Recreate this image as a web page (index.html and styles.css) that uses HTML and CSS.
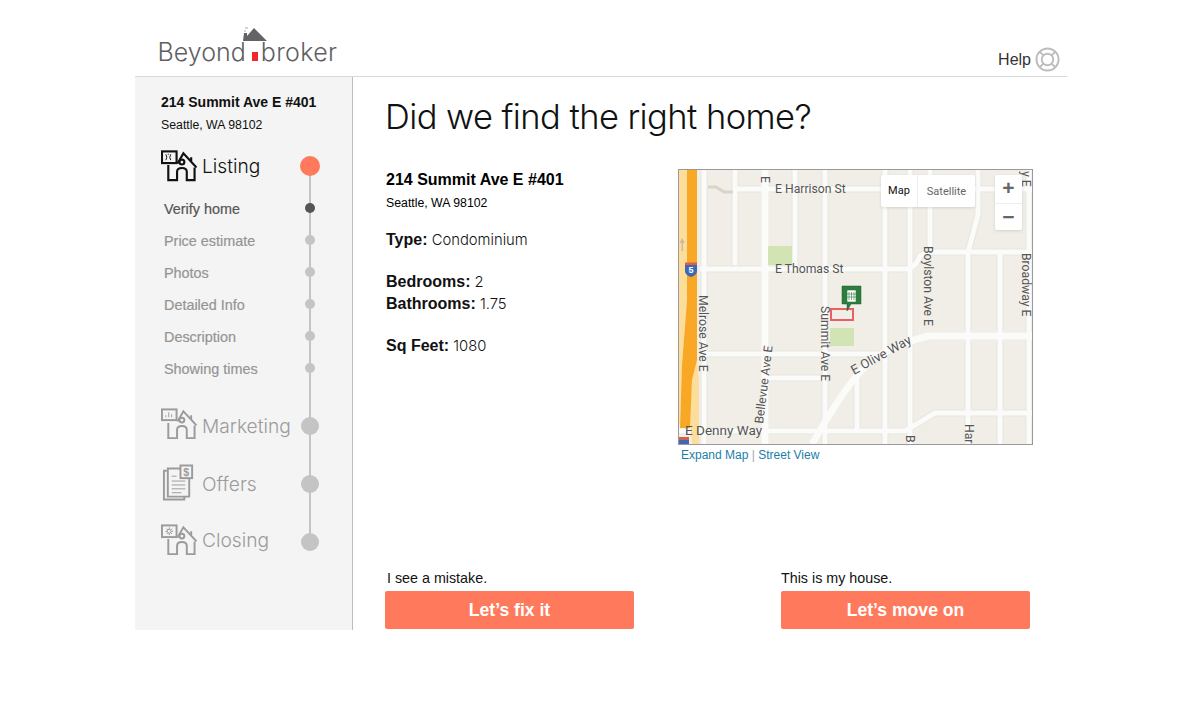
FILE: index.html
```html
<!DOCTYPE html>
<html lang="en">
<head>
<meta charset="utf-8">
<title>Beyond broker</title>
<link rel="stylesheet" href="styles.css">
</head>
<body>
<div class="page">
  <header class="header">
    <div class="logo">
      <span class="logo-word">Beyond</span>
      <svg class="logo-house" viewBox="0 0 24 36" aria-hidden="true">
        <path class="lh-smoke" d="M1 5h2M2 2h3"/>
        <path class="lh-roof" d="M0 15 L1 7 H4 V10 L11 2 L24 15 Z"/>
        <rect class="lh-door" x="9" y="26" width="6" height="9"/>
      </svg>
      <span class="logo-word logo-second">broker</span>
    </div>
    <div class="help">
      <span>Help</span>
      <svg class="help-icon" viewBox="0 0 26 26" aria-hidden="true">
        <circle cx="13" cy="13" r="11.5"/>
        <circle cx="13" cy="13" r="6"/>
        <path d="M5 5l4 4M21 5l-4 4M5 21l4-4M21 21l-4-4"/>
      </svg>
    </div>
  </header>

  <div class="body-row">
    <aside class="sidebar">
      <div class="side-address">
        <div class="side-street">214 Summit Ave E #401</div>
        <div class="side-city">Seattle, WA 98102</div>
      </div>
      <nav class="steps">
        <div class="step step-active">
          <div class="step-label">
            <svg class="step-icon" viewBox="0 0 37 32" aria-hidden="true">
              <path d="M7.5 15 V30.5 H16.5 V22 Q16.5 18 21.500 18 Q26.500 18 26.500 22 V30.500 H34.500 V17.500"/>
              <path d="M17 13.500 L23 3 L36.500 17.500 M31 7V11"/>
              <circle cx="21.500" cy="12" r="2.500"/>
              <rect class="icon-box" x="1" y="1" width="15" height="12"/>
              <path class="thin" d="M5 4 Q7 7 5 10 M10 4 Q8 7 10 10 M7 4h1"/>
            </svg>
            <span>Listing</span>
          </div>
          <span class="dot dot-big dot-accent"></span>
        </div>

        <div class="substeps">
          <div class="sub sub-current"><span>Verify home</span><span class="dot dot-small"></span></div>
          <div class="sub"><span>Price estimate</span><span class="dot dot-small"></span></div>
          <div class="sub"><span>Photos</span><span class="dot dot-small"></span></div>
          <div class="sub"><span>Detailed Info</span><span class="dot dot-small"></span></div>
          <div class="sub"><span>Description</span><span class="dot dot-small"></span></div>
          <div class="sub"><span>Showing times</span><span class="dot dot-small"></span></div>
        </div>

        <div class="step step-marketing">
          <div class="step-label">
            <svg class="step-icon" viewBox="0 0 37 32" aria-hidden="true">
              <path d="M7.500 15 V30.500 H16.500 V22 Q16.500 18 21.500 18 Q26.500 18 26.500 22 V30.500 H34.500 V17.500"/>
              <path d="M17 13.500 L23 3 L36.500 17.500 M31 7V11"/>
              <circle cx="21.500" cy="12" r="2.500"/>
              <rect class="icon-box" x="1" y="1" width="15" height="11"/>
              <path class="thin" d="M5 9V7M8 9V4M11 9V6"/>
            </svg>
            <span>Marketing</span>
          </div>
          <span class="dot dot-big"></span>
        </div>

        <div class="step step-offers">
          <div class="step-label">
            <svg class="step-icon" viewBox="0 0 37 38" aria-hidden="true">
              <path d="M6 6.500 H3 V36 H24 V33"/>
              <path d="M21 4 H7 V33 H29 V15"/>
              <path class="thin" d="M11 12h5M11 17h14M11 21h14M11 25h14M11 29h10"/>
              <rect class="icon-box" x="20" y="1" width="12" height="13"/>
              <text class="icon-dollar" x="26" y="11.500">$</text>
            </svg>
            <span>Offers</span>
          </div>
          <span class="dot dot-big"></span>
        </div>

        <div class="step step-closing">
          <div class="step-label">
            <svg class="step-icon" viewBox="0 0 37 32" aria-hidden="true">
              <path d="M7.500 15 V30.500 H16.500 V22 Q16.500 18 21.500 18 Q26.500 18 26.500 22 V30.500 H34.500 V17.500"/>
              <path d="M17 13.500 L23 3 L36.500 17.500 M31 7V11"/>
              <circle cx="21.500" cy="12" r="2.500"/>
              <rect class="icon-box" x="1" y="1" width="15" height="12"/>
              <circle class="thin" cx="8.500" cy="7" r="2"/>
              <path class="thin" d="M8.500 3V5M8.500 9V11M4.500 7H6.500M10.500 7H12.500M5.700 4.200L7 5.500M11.300 4.200L10 5.500M5.700 9.800L7 8.500M11.300 9.800L10 8.500"/>
            </svg>
            <span>Closing</span>
          </div>
          <span class="dot dot-big"></span>
        </div>
      </nav>
    </aside>

    <main class="main">
      <h1 class="title">Did we find the right home?</h1>
      <div class="columns">
        <section class="details">
          <div class="street">214 Summit Ave E #401</div>
          <div class="city">Seattle, WA 98102</div>
          <p class="fact"><b>Type:</b> Condominium</p>
          <p class="fact"><b>Bedrooms:</b> 2<br><b>Bathrooms:</b> 1.75</p>
          <p class="fact"><b>Sq Feet:</b> 1080</p>
        </section>
        <section class="map-col">
          <div class="map">
            <svg class="map-art" viewBox="679 170 353 274" aria-hidden="true">
              <rect x="679" y="170" width="353" height="274" fill="#f1eee8"/>
              <g class="edges">
                <path d="M735 170V265M765 170V444M795 170V269M825 170V444M857 375V431M885 170V444M910 170V444M930 170V250M1000 250V444M1029 170V444M704 170V444"/>
                <path d="M735 189H1032M700 269H905Q915 269 920 256Q925 252 935 252H1032M700 354H880M765 378H825M679 431H905L935 413H1032"/>
                <path d="M812 444C835 405 850 380 870 362C885 350 905 342 928 336H1032"/>
                <path d="M978 170V215L968 252V444"/>
              </g>
              <g class="roads">
                <path d="M735 170V265M795 170V269M825 170V444M857 375V431M885 170V444M910 170V444M930 170V250M1000 250V444M1029 170V444M704 170V444"/>
                <path d="M735 189H1032M700 269H905Q915 269 920 256Q925 252 935 252H1032M700 354H880M765 378H825M679 431H905L935 413H1032"/>
                <path d="M978 170V215L968 252V444"/>
                <path class="road-wide" d="M812 444C835 405 850 380 870 362C885 350 905 342 928 336H1032"/>
                <path class="road-wide" d="M765 170V444"/>
              </g>
              <path class="path-tan" d="M708 187H716L724 192H733"/>
              <rect class="park" x="768" y="246" width="24" height="19"/>
              <rect class="park" x="830" y="328" width="24" height="18"/>
              <path class="fwy-pale" d="M679 170H687V300L682 365L680 424H679Z"/>
              <path class="fwy-pale" d="M697 360L699 380V444H692L690 424L692 380Z"/>
              <path class="fwy" d="M687 170H697V360L692 380L690 428H680L682 365L687 300Z"/>
              <path class="arrow" d="M682 238L679.500 243H681.500V251H683V243H685Z"/>
              <path class="shield-top" d="M685 262.500H697V265H685Z"/>
              <path class="shield" d="M685 265H697V271Q697 275 691 277Q685 275 685 271Z"/>
              <text class="shield-text" x="691" y="273">5</text>
              <rect class="shield-top" x="679" y="437" width="10" height="3"/>
              <rect class="shield" x="679" y="440" width="10" height="4"/>

              <text class="lbl" x="775" y="193">E Harrison St</text>
              <text class="lbl" x="775" y="273">E Thomas St</text>
              <text class="lbl lbl-big" x="685" y="435">E Denny Way</text>
              <text class="lbl" transform="translate(761 176) rotate(90)">E</text>
              <text class="lbl" transform="translate(699 295) rotate(90)">Melrose Ave E</text>
              <text class="lbl" transform="translate(821 306) rotate(90)">Summit Ave E</text>
              <text class="lbl" transform="translate(924 246) rotate(90)">Boylston Ave E</text>
              <text class="lbl" transform="translate(1022 253) rotate(90)">Broadway E</text>
              <text class="lbl" transform="translate(1022 171) rotate(90)">y E</text>
              <text class="lbl" transform="translate(763 424) rotate(-83)">Bellevue Ave E</text>
              <text class="lbl lbl-olive" transform="translate(854 375) rotate(-29)">E Olive Way</text>
              <text class="lbl" transform="translate(906 435) rotate(90)">B</text>
              <text class="lbl" transform="translate(965 424) rotate(90)">Har</text>

              <rect class="lot" x="831" y="309" width="22" height="11"/>
              <path class="pin" d="M842 286H861V304H851L847 311V304H842Z"/>
              <path class="pin-b" d="M847 290h9v12h-9zM849 292v8M851.500 292v8M854 292v8M847 294h9M847 297h9"/>
            </svg>
            <div class="map-type">
              <span class="type-on">Map</span>
              <span class="type-off">Satellite</span>
            </div>
            <div class="map-zoom">
              <span class="zoom-btn">+</span>
              <span class="zoom-btn">&minus;</span>
            </div>
          </div>
          <div class="map-links"><a>Expand Map</a> <span class="sep">|</span> <a>Street View</a></div>
        </section>
      </div>
      <div class="cta-row">
        <div class="cta">
          <div class="cta-note cta-note-shift">I see a mistake.</div>
          <button class="btn" type="button">Let’s fix it</button>
        </div>
        <div class="cta">
          <div class="cta-note">This is my house.</div>
          <button class="btn" type="button">Let’s move on</button>
        </div>
      </div>
    </main>
  </div>
</div>
</body>
</html>
```

FILE: styles.css
```css
* { box-sizing: border-box; }
html, body { margin: 0; padding: 0; background: #fff; }
body { font-family: "Liberation Sans", Arial, sans-serif; color: #000; }
.page { width: 932px; margin-left: 135px; height: 722px; }

/* header */
.header { height: 77px; border-bottom: 1px solid #d9d9d9; display: flex; justify-content: space-between; align-items: flex-start; }
.logo { position: relative; display: flex; margin: 36px 0 0 22.500px; }
.logo-word { font-family: Inter, sans-serif; font-weight: 300; font-size: 25px; line-height: 33px; color: #5f5f63; }
.logo-second { margin-left: 15px; letter-spacing: 0.350px; }
.logo-house { position: absolute; left: 85.500px; top: -10px; width: 24px; height: 36px; }
.lh-smoke { stroke: #aaa; stroke-width: 1; fill: none; }
.lh-roof { fill: #636366; }
.lh-door { fill: #f0282d; }
.help { display: flex; align-items: center; margin: 47px 7px 0 0; font-size: 16px; color: #333; gap: 4px; }
.help-icon { width: 25px; height: 25px; fill: none; stroke: #bdbdbd; stroke-width: 2; }

/* layout */
.body-row { display: flex; height: 553px; }

/* sidebar */
.sidebar { width: 218px; background: #f4f4f4; border-right: 1px solid #bdbdbd; padding: 16px 32px 0 26px; }
.side-street { font-size: 14px; font-weight: 700; line-height: 18px; color: #111; }
.side-city { font-size: 12.300px; line-height: 18px; margin-top: 5px; color: #111; }
.steps { position: relative; margin-top: 16px; }
.steps::before { content: ""; position: absolute; top: 16px; right: 9px; width: 2px; height: 376px; background: #c4c4c4; }
.step { position: relative; display: flex; justify-content: space-between; align-items: center; height: 32px; color: #9b9b9b; }
.step-active { color: #111; }
.step-label { display: flex; align-items: center; font-family: Inter, sans-serif; font-weight: 300; font-size: 19.200px; }
.step-label span { margin-left: 5px; }
.step-icon { width: 36px; height: 32px; fill: none; stroke: currentColor; stroke-width: 2; flex: none; }
.step-active .step-icon { stroke-width: 2.200; }
.step-icon .thin { stroke-width: 1; }
.icon-box { fill: #f4f4f4; }
.icon-dollar { font-size: 11px; font-weight: 700; text-anchor: middle; stroke: none; fill: currentColor; font-family: "Liberation Sans", sans-serif; }
.step-marketing { margin-top: 23px; height: 36px; }
.step-marketing .step-icon { margin-bottom: 4px; }
.step-offers { margin-top: 22px; height: 36px; }
.step-closing { margin-top: 22px; height: 36px; }
.step-closing .step-label { margin-bottom: 4px; }
.step-offers .step-icon { height: 38px; width: 36px; margin-bottom: 2px; }
.dot { position: relative; display: block; border-radius: 50%; background: #c4c4c4; flex: none; }
.dot-big { width: 18px; height: 18px; margin-right: 1px; }
.dot-accent { width: 20px; height: 20px; margin-right: 0; background: #ff7a5c; }
.dot-small { width: 10px; height: 10px; margin-right: 5px; margin-bottom: 2px; }
.substeps { margin-top: 11px; }
.sub { display: flex; justify-content: space-between; align-items: center; height: 32px; padding-left: 3px; font-size: 14.400px; color: #949494; -webkit-text-stroke: 0.2px currentColor; }
.sub-current { color: #555; }
.sub-current .dot { background: #555; }

/* main */
.main { flex: 1; padding: 0 34px 1px 33px; display: flex; flex-direction: column; }
.title { margin: 17px 0 0 -1px; font-family: Inter, sans-serif; font-weight: 300; font-size: 34.500px; letter-spacing: -0.570px; line-height: 46px; color: #111; }
.columns { display: flex; justify-content: space-between; margin-top: 29px; flex: 1; }
.details { width: 280px; }
.street { font-size: 16px; font-weight: 700; line-height: 20px; margin-top: 1px; }
.city { font-size: 12.300px; line-height: 18px; margin-top: 4px; }
.fact { margin: 0 0 20px; font-family: Inter, sans-serif; font-weight: 300; font-size: 14.800px; line-height: 22px; color: #111; }
.city + .fact { margin-top: 17px; }
.fact b { font-family: "Liberation Sans", sans-serif; font-size: 16px; font-weight: 700; }
.map-col { width: 355px; }
.map { position: relative; width: 355px; height: 276px; border: 1px solid #999; overflow: hidden; }
.map-art { display: block; width: 353px; height: 274px; }
.edges path { fill: none; stroke: #e7e5df; stroke-width: 7; }
.roads path { fill: none; stroke: #fbfbf9; stroke-width: 5; }
.roads .road-wide { stroke-width: 7; }
.path-tan { fill: none; stroke: #d8d4c8; stroke-width: 3; }
.park { fill: #d2e3b4; }
.fwy { fill: #f9a825; }
.fwy-pale { fill: #fddd9a; }
.arrow { fill: #c9bda0; }
.shield { fill: #3d68b5; }
.shield-top { fill: #d9614a; }
.shield-text { font-family: "Liberation Sans", sans-serif; font-size: 9px; font-weight: 700; fill: #fff; text-anchor: middle; }
.lbl { font-family: Roboto, sans-serif; font-size: 12.200px; fill: #555; }
.lbl-big { font-size: 13.500px; }
.lbl-olive { font-size: 13px; }
.lot { fill: none; stroke: #ea5f5f; stroke-width: 2; }
.pin { fill: #2e7d3c; stroke: #1f5f2c; stroke-width: .5; }
.pin-b { fill: #fff; stroke: #2e7d3c; stroke-width: .6; }
.map-type { position: absolute; left: 202px; top: 5px; display: flex; height: 32px; background: #fff; border-radius: 2px; box-shadow: 0 1px 3px rgba(0,0,0,.12); font-family: Roboto, sans-serif; font-size: 11px; align-items: center; }
.type-on { width: 37px; text-align: center; color: #111; border-right: 1px solid #eee; height: 32px; line-height: 32px; }
.type-off { width: 57px; text-align: center; color: #666; }
.map-zoom { position: absolute; left: 316px; top: 5px; width: 27px; height: 55px; background: #fff; border-radius: 2px; box-shadow: 0 1px 3px rgba(0,0,0,.12); display: flex; flex-direction: column; }
.zoom-btn { height: 27.500px; line-height: 26px; text-align: center; font-size: 21px; font-weight: 700; color: #666; }
.zoom-btn + .zoom-btn { border-top: 1px solid #eee; }
.map-links { margin: 3px 0 0 3px; font-size: 12px; line-height: 15px; color: #1a7fa8; }
.sep { color: #aaa; }
.cta-row { display: flex; justify-content: space-between; padding-right: 3px; margin-left: -1px; }
.cta { width: 249px; }
.cta-note { font-size: 14.300px; line-height: 16px; margin-bottom: 5px; color: #111; }
.cta-note-shift { margin-left: 2px; }
.btn { display: block; width: 249px; height: 38px; border: 0; border-radius: 2px; background: #ff7a5c; color: #fff; font-family: "Liberation Sans", sans-serif; font-size: 17.600px; font-weight: 700; padding: 0; }
```
